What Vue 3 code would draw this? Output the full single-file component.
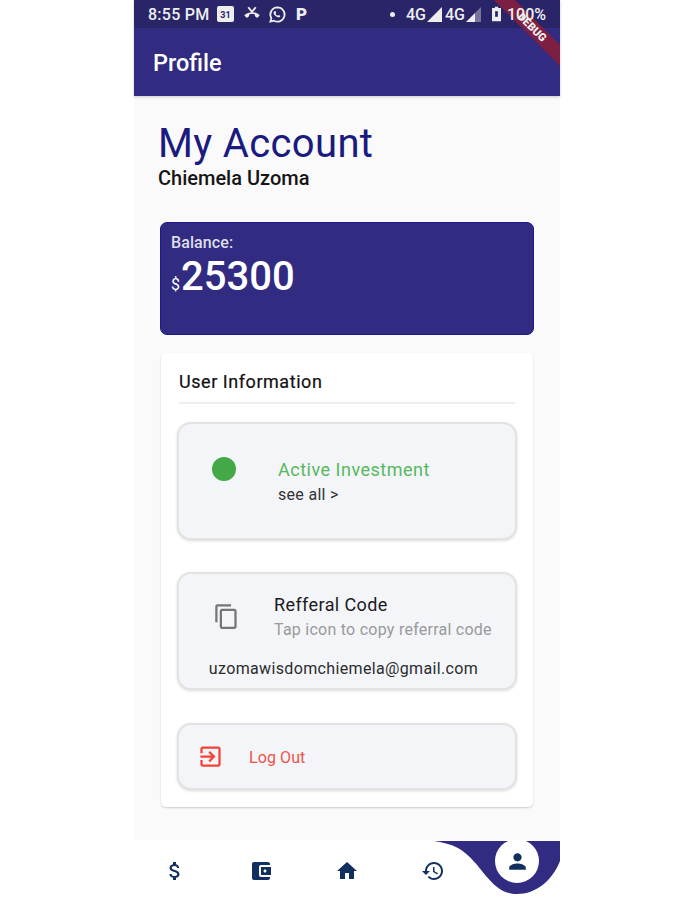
<script setup>
const navIcons = [
  { name: 'dollar', d: 'M11.8 10.9c-2.27-.59-3-1.2-3-2.15 0-1.09 1.01-1.85 2.7-1.85 1.78 0 2.44.85 2.5 2.1h2.21c-.07-1.72-1.12-3.3-3.21-3.81V3h-3v2.16c-1.94.42-3.5 1.68-3.5 3.61 0 2.31 1.91 3.46 4.7 4.13 2.5.6 3 1.48 3 2.41 0 .69-.49 1.79-2.7 1.79-2.06 0-2.87-.92-2.98-2.1h-2.2c.12 2.19 1.76 3.42 3.68 3.83V21h3v-2.15c1.95-.37 3.5-1.5 3.5-3.55 0-2.84-2.43-3.81-4.7-4.4z' },
  { name: 'wallet', d: 'M21 18v1c0 1.1-.9 2-2 2H5c-1.11 0-2-.9-2-2V5c0-1.1.89-2 2-2h14c1.1 0 2 .9 2 2v1h-9c-1.11 0-2 .9-2 2v8c0 1.1.89 2 2 2h9zm-9-2h10V8H12v8zm4-2.5c-.83 0-1.5-.67-1.5-1.5s.67-1.5 1.5-1.5 1.5.67 1.5 1.5-.67 1.5-1.5 1.5z' },
  { name: 'home', d: 'M10 20v-6h4v6h5v-8h3L12 3 2 12h3v8z' },
  { name: 'history', d: 'M13 3c-4.97 0-9 4.03-9 9H1l3.89 3.89.07.14L9 12H6c0-3.87 3.13-7 7-7s7 3.13 7 7-3.13 7-7 7c-1.93 0-3.68-.79-4.94-2.06l-1.42 1.42C8.27 19.99 10.51 21 13 21c4.97 0 9-4.03 9-9s-4.03-9-9-9zm-1 5v5l4.28 2.54.72-1.21-3.5-2.08V8H12z' }
]
</script>

<template>
  <div class="page">
    <div class="phone">
      <header class="top">
        <div class="status">
          <div class="status-left">
            <span class="time">8:55 PM</span>
            <span class="cal">31</span>
            <svg class="st" viewBox="0 0 24 24"><path fill="none" stroke="#eee" stroke-width="2.6" d="M7 3l5 6 5-6"/><path fill="#eee" d="M12 9.500c-3.600 0-7 1.300-9.600 3.500-.5.400-.5 1.100 0 1.600l2.300 2.200c.4.400 1 .4 1.400 0l2.100-2v-2c1.200-.5 2.500-.7 3.800-.7s2.600.2 3.800.7v2l2.100 2c.4.400 1 .4 1.400 0l2.300-2.200c.5-.5.5-1.200 0-1.600C19 10.800 15.600 9.500 12 9.500z"/></svg>
            <svg class="st wa" viewBox="0 0 24 24"><path fill="none" stroke="#eee" stroke-width="2.200" d="M12 3a9 9 0 0 0-7.700 13.600L3 21l4.500-1.200A9 9 0 1 0 12 3z"/><path fill="#eee" d="M9 7.500c1 0 1.500 2.500 1 3-.5.500-.5 1 .5 2s1.500 1 2 .5c.5-.5 3 0 3 1 0 1.500-1.500 2-3 1.500-3-1-5-3-5.500-5.500C7 8.500 8 7.500 9 7.500z"/></svg>
            <span class="p">P</span>
          </div>
          <div class="status-right">
            <span class="dot"></span>
            <span>4G</span>
            <svg class="sig" viewBox="0 0 10 10"><path fill="#eee" d="M10 0v10H0z"/></svg>
            <span>4G</span>
            <svg class="sig" viewBox="0 0 10 10"><path fill="#eee" d="M6 4v6H0z"/><path fill="#eee" opacity=".4" d="M10 0v10H6V4z"/></svg>
            <svg class="batt" viewBox="0 0 8 13"><path fill="#eee" d="M2.500 0h3v1.200H8V13H0V1.200h2.500z"/><path fill="#2a2468" d="M2.800 4h2.400v5H2.800z"/></svg>
            <span>100%</span>
          </div>
        </div>
        <div class="appbar">Profile</div>
        <div class="debug"><span>DEBUG</span></div>
      </header>

      <main class="content">
        <h1 class="title">My Account</h1>
        <p class="name">Chiemela Uzoma</p>

        <section class="balance">
          <div class="bal-label">Balance:</div>
          <div class="bal-value"><span class="cur">$</span>25300</div>
        </section>

        <section class="info">
          <h2 class="info-title">User Information</h2>
          <div class="rule"></div>

          <div class="tile active-tile">
            <span class="green"></span>
            <div class="active-text">
              <div class="active-name">Active Investment</div>
              <div class="see">see all &gt;</div>
            </div>
          </div>

          <div class="tile ref-tile">
            <div class="ref-row">
              <svg class="copy" viewBox="0 0 24 24"><path fill="#757575" d="M16 1H4c-1.100 0-2 .9-2 2v14h2V3h12V1zm3 4H8c-1.100 0-2 .9-2 2v14c0 1.100.9 2 2 2h11c1.100 0 2-.9 2-2V7c0-1.100-.9-2-2-2zm0 16H8V7h11v14z"/></svg>
              <div>
                <div class="ref-name">Refferal Code</div>
                <div class="ref-sub">Tap icon to copy referral code</div>
              </div>
            </div>
            <div class="email">uzomawisdomchiemela@gmail.com</div>
          </div>

          <div class="tile out-tile">
            <svg class="out" viewBox="0 0 24 24"><path fill="#f44336" d="M10.090 15.590 11.500 17l5-5-5-5-1.410 1.410L12.670 11H3v2h9.670l-2.580 2.590zM19 3H5c-1.110 0-2 .9-2 2v4h2V5h14v14H5v-4H3v4c0 1.100.89 2 2 2h14c1.100 0 2-.9 2-2V5c0-1.100-.9-2-2-2z"/></svg>
            <span class="out-text">Log Out</span>
          </div>
        </section>
      </main>

      <nav class="nav">
        <svg class="curve" viewBox="0 0 126 56"><path fill="#312b82" d="M0 0H126V20C118 40 102 53 83 53C68 53 60 44 52 35C44 25 36 14 24 7C16 3 8 1 0 0Z"/></svg>
        <svg v-for="i in navIcons" :key="i.name" class="nav-icon" viewBox="0 0 24 24"><path fill="#12305f" :d="i.d"/></svg>
        <span class="nav-spacer"></span>
        <div class="bubble">
          <svg viewBox="0 0 24 24"><path fill="#12305f" d="M12 12c2.210 0 4-1.790 4-4s-1.790-4-4-4-4 1.790-4 4 1.790 4 4 4zm0 2c-2.670 0-8 1.340-8 4v2h16v-2c0-2.660-5.330-4-8-4z"/></svg>
        </div>
      </nav>
    </div>
  </div>
</template>

<style scoped>
.page { width: 693px; height: 900px; background: #fff; font-family: Roboto, "Liberation Sans", sans-serif; overflow: hidden; }
.phone { width: 426px; height: 900px; margin-left: 134px; display: flex; flex-direction: column; position: relative; }
.top { position: relative; overflow: hidden; height: 96px; flex: none; box-shadow: 0 1px 3px rgba(0,0,0,.2); z-index: 2; background: #312b82; }
.status { height: 28px; background: #2a2468; color: #eee; display: flex; justify-content: space-between; align-items: center; padding: 0 14px; font-size: 16px; font-weight: 500; }
.status-left, .status-right { display: flex; align-items: center; position: relative; z-index: 2; }
.status-left { gap: 7px; }
.status-right { gap: 1px; }
.time { width: 62px; white-space: nowrap; letter-spacing: .25px; }
.cal { width: 17px; height: 16px; background: #eee; color: #2a2468; font-size: 9px; font-weight: 700; text-align: center; line-height: 18px; border-radius: 2px; }
.st { width: 18px; height: 18px; margin-left: 2px; }
.wa { margin-left: 0; width: 19px; height: 19px; }
.p { font-weight: 900; font-size: 17px; margin-left: 2px; }
.dot { width: 5px; height: 5px; border-radius: 50%; background: #eee; margin-right: 10px; }
.sig { width: 15px; height: 15px; margin-right: 2px; }
.batt { width: 9px; height: 16px; margin: 0 5px 0 8px; }
.appbar { height: 68px; display: flex; align-items: center; padding: 2px 0 0 19px; color: #fff; font-size: 23.500px; font-weight: 500; box-sizing: border-box; }
.debug { position: absolute; top: 20px; right: -27px; width: 110px; height: 15px; background: #7d1f43; transform: rotate(45deg); color: #f2f2f2; font-size: 11px; font-weight: 900; text-align: center; line-height: 15px; z-index: 1; }
.content { flex: none; height: 744px; background: #fafafa; padding: 25px 26px 0 24px; box-sizing: border-box; }
.title { margin: 0; font-size: 40px; font-weight: 400; line-height: 45px; color: #1a1a80; letter-spacing: .35px; }
.name { margin: 0; font-size: 20px; font-weight: 500; line-height: 24px; color: #151515; }
.balance { margin: 32px 0 18px 2px; height: 113px; box-sizing: border-box; border: 1.500px solid #1d1a8c; border-radius: 7px; background: #312b82; padding: 11px 10px; color: #fff; }
.bal-label { font-size: 16px; font-weight: 500; line-height: 18px; color: #dedeec; letter-spacing: .1px; }
.bal-value { font-size: 40px; font-weight: 500; line-height: 48px; margin-top: 1px; }
.cur { font-size: 16px; font-weight: 400; margin-right: 1px; }
.info { margin-left: 3px; width: 372px; height: 454px; background: #fff; border-radius: 5px; box-shadow: 0 1px 2px rgba(0,0,0,.18); padding: 17px 17px 0 17px; box-sizing: border-box; }
.info-title { margin: 0 0 0 1px; font-size: 18px; line-height: 24px; font-weight: 400; color: #111; letter-spacing: .55px; -webkit-text-stroke: .2px #111; }
.rule { height: 2px; background: #eeeeee; margin: 8px 1px 18px 1px; }
.tile { background: #f3f5f9; border: 2px solid #e3e3e3; border-radius: 14px; box-shadow: 0 1px 3px rgba(0,0,0,.15); box-sizing: border-box; margin: 0 -1px; }
.active-tile { height: 118px; display: flex; align-items: center; padding: 0 0 0 33px; }
.green { width: 24px; height: 24px; border-radius: 50%; background: #43a947; flex: none; margin: 0 42px 24px 0; }
.active-text { margin-top: 4px; }
.active-name { font-size: 18px; line-height: 24px; color: #58b85c; letter-spacing: .5px; }
.see { font-size: 16px; line-height: 26px; color: #333; letter-spacing: .3px; }
.ref-tile { height: 118px; margin-top: 32px; padding: 19px 0 0 0; }
.ref-row { display: flex; align-items: flex-start; padding-left: 34px; }
.copy { width: 27px; height: 27px; margin: 10px 34px 0 0; flex: none; }
.ref-name { font-size: 18px; line-height: 24px; color: #1a1a1a; letter-spacing: .4px; }
.ref-sub { font-size: 16px; line-height: 26px; color: #9a9a9a; letter-spacing: .25px; }
.email { font-size: 16px; line-height: 24px; color: #2c2c2c; text-align: center; margin-top: 14px; padding-right: 7px; letter-spacing: .35px; }
.out-tile { height: 67px; margin-top: 33px; display: flex; align-items: center; padding-left: 18px; }
.out { width: 27px; height: 27px; flex: none; }
.out-text { margin-left: 25px; font-size: 16px; color: #f0524a; position: relative; top: 1px; letter-spacing: .1px; }
.nav { flex: 1; background: #fff; position: relative; display: flex; align-items: center; padding: 0 0 0 29px; overflow: hidden; }
.curve { position: absolute; right: 0; top: 1px; width: 126px; height: 56px; }
.nav-icon { width: 24px; height: 24px; flex: none; margin-right: 62px; position: relative; top: 1px; }
.nav-spacer { flex: 1; }
.bubble { position: absolute; right: 21px; top: -1px; width: 44px; height: 44px; border-radius: 50%; background: #fff; display: flex; align-items: center; justify-content: center; }
.bubble svg { width: 25px; height: 25px; }
</style>
